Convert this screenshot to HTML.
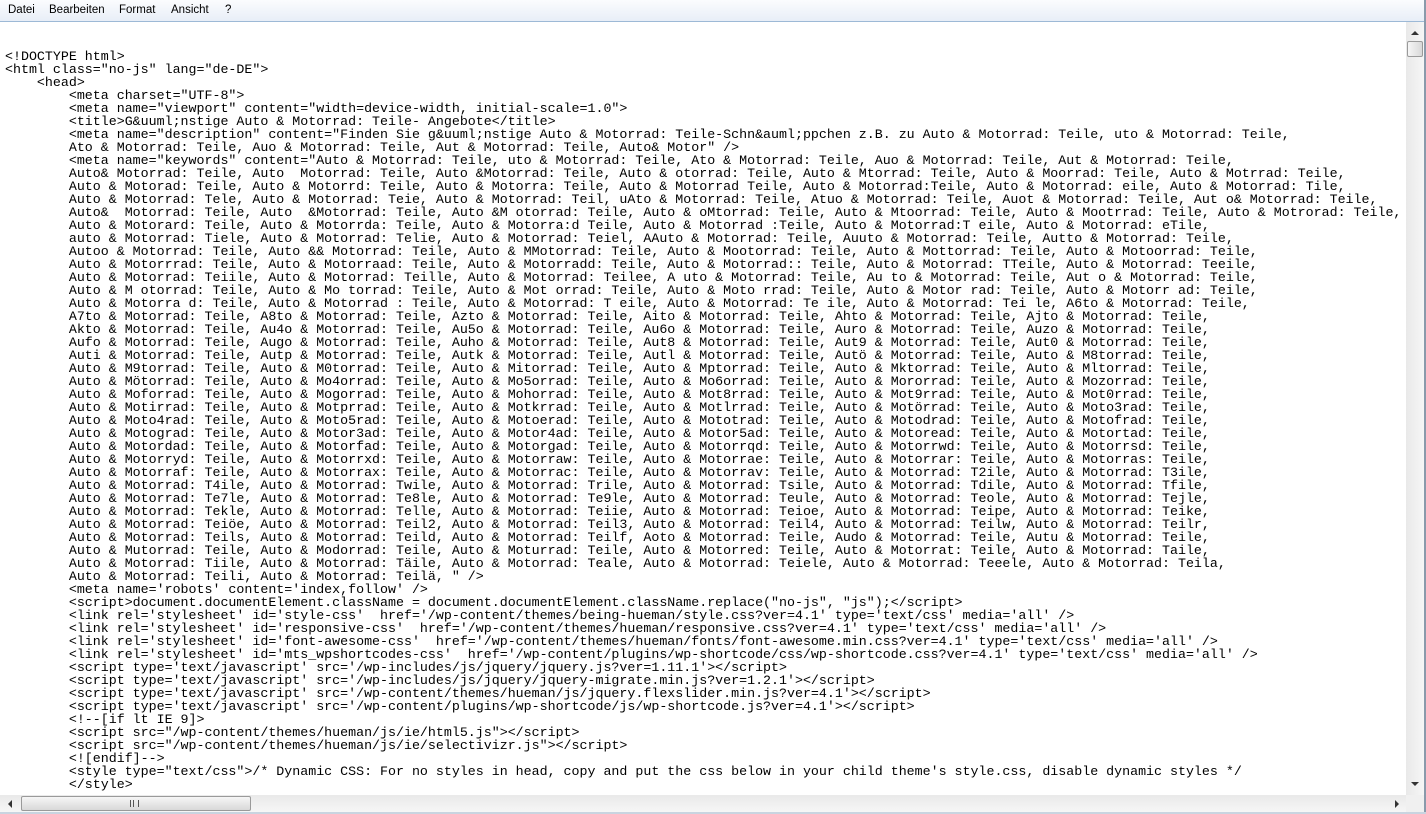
<!DOCTYPE html>
<html><head><meta charset="utf-8"><style>
html,body{margin:0;padding:0;width:1426px;height:814px;overflow:hidden;background:#fff;position:relative}
#menu{position:absolute;left:0;top:0;width:1426px;height:21px;background:linear-gradient(#fbfcfe,#e8eef7);border-bottom:1px solid #9db9d6;font:11.5px "Liberation Sans",sans-serif;color:#000}
#menu span{position:absolute;top:4px}
#txt{position:absolute;left:0;top:22px;width:1406px;height:773px;overflow:hidden}
pre{margin:0;position:absolute;left:5px;top:28px;font:13.31px/13px "Liberation Mono",monospace;color:#000;white-space:pre}
#vs{position:absolute;left:1406px;top:22px;width:18px;height:773px;background:linear-gradient(90deg,#e9e9e9,#f6f6f6)}
#hs{position:absolute;left:0;top:795px;width:1406px;height:17px;background:linear-gradient(#e9e9e9,#f6f6f6)}
#corner{position:absolute;left:1406px;top:795px;width:18px;height:17px;background:#f0f0f0}
#rb{position:absolute;left:1424px;top:0;width:2px;height:814px;background:#8a9aab}
#bb{position:absolute;left:0;top:812px;width:1426px;height:2px;background:#c9d4e0}
.thumb{position:absolute;border:1px solid #9a9a9a;border-radius:2px;background:linear-gradient(90deg,#f4f4f4,#dcdcdc)}
.tri{position:absolute;width:0;height:0}
</style></head><body>
<div id="menu"><span style="left:8px">Datei</span><span style="left:49px">Bearbeiten</span><span style="left:119px">Format</span><span style="left:171px">Ansicht</span><span style="left:225px">?</span></div>
<div id="txt"><pre>&lt;!DOCTYPE html&gt;
&lt;html class="no-js" lang="de-DE"&gt;
    &lt;head&gt;
        &lt;meta charset="UTF-8"&gt;
        &lt;meta name="viewport" content="width=device-width, initial-scale=1.0"&gt;
        &lt;title&gt;G&amp;uuml;nstige Auto &amp; Motorrad: Teile- Angebote&lt;/title&gt;
        &lt;meta name="description" content="Finden Sie g&amp;uuml;nstige Auto &amp; Motorrad: Teile-Schn&amp;auml;ppchen z.B. zu Auto &amp; Motorrad: Teile, uto &amp; Motorrad: Teile,
        Ato &amp; Motorrad: Teile, Auo &amp; Motorrad: Teile, Aut &amp; Motorrad: Teile, Auto&amp; Motor" /&gt;
        &lt;meta name="keywords" content="Auto &amp; Motorrad: Teile, uto &amp; Motorrad: Teile, Ato &amp; Motorrad: Teile, Auo &amp; Motorrad: Teile, Aut &amp; Motorrad: Teile,
        Auto&amp; Motorrad: Teile, Auto  Motorrad: Teile, Auto &amp;Motorrad: Teile, Auto &amp; otorrad: Teile, Auto &amp; Mtorrad: Teile, Auto &amp; Moorrad: Teile, Auto &amp; Motrrad: Teile,
        Auto &amp; Motorad: Teile, Auto &amp; Motorrd: Teile, Auto &amp; Motorra: Teile, Auto &amp; Motorrad Teile, Auto &amp; Motorrad:Teile, Auto &amp; Motorrad: eile, Auto &amp; Motorrad: Tile,
        Auto &amp; Motorrad: Tele, Auto &amp; Motorrad: Teie, Auto &amp; Motorrad: Teil, uAto &amp; Motorrad: Teile, Atuo &amp; Motorrad: Teile, Auot &amp; Motorrad: Teile, Aut o&amp; Motorrad: Teile,
        Auto&amp;  Motorrad: Teile, Auto  &amp;Motorrad: Teile, Auto &amp;M otorrad: Teile, Auto &amp; oMtorrad: Teile, Auto &amp; Mtoorrad: Teile, Auto &amp; Mootrrad: Teile, Auto &amp; Motrorad: Teile,
        Auto &amp; Motorard: Teile, Auto &amp; Motorrda: Teile, Auto &amp; Motorra:d Teile, Auto &amp; Motorrad :Teile, Auto &amp; Motorrad:T eile, Auto &amp; Motorrad: eTile,
        auto &amp; Motorrad: Tiele, Auto &amp; Motorrad: Telie, Auto &amp; Motorrad: Teiel, AAuto &amp; Motorrad: Teile, Auuto &amp; Motorrad: Teile, Autto &amp; Motorrad: Teile,
        Autoo &amp; Motorrad: Teile, Auto &amp;&amp; Motorrad: Teile, Auto &amp; MMotorrad: Teile, Auto &amp; Mootorrad: Teile, Auto &amp; Mottorrad: Teile, Auto &amp; Motoorrad: Teile,
        Auto &amp; Motorrrad: Teile, Auto &amp; Motorraad: Teile, Auto &amp; Motorradd: Teile, Auto &amp; Motorrad:: Teile, Auto &amp; Motorrad: TTeile, Auto &amp; Motorrad: Teeile,
        Auto &amp; Motorrad: Teiile, Auto &amp; Motorrad: Teille, Auto &amp; Motorrad: Teilee, A uto &amp; Motorrad: Teile, Au to &amp; Motorrad: Teile, Aut o &amp; Motorrad: Teile,
        Auto &amp; M otorrad: Teile, Auto &amp; Mo torrad: Teile, Auto &amp; Mot orrad: Teile, Auto &amp; Moto rrad: Teile, Auto &amp; Motor rad: Teile, Auto &amp; Motorr ad: Teile,
        Auto &amp; Motorra d: Teile, Auto &amp; Motorrad : Teile, Auto &amp; Motorrad: T eile, Auto &amp; Motorrad: Te ile, Auto &amp; Motorrad: Tei le, A6to &amp; Motorrad: Teile,
        A7to &amp; Motorrad: Teile, A8to &amp; Motorrad: Teile, Azto &amp; Motorrad: Teile, Aito &amp; Motorrad: Teile, Ahto &amp; Motorrad: Teile, Ajto &amp; Motorrad: Teile,
        Akto &amp; Motorrad: Teile, Au4o &amp; Motorrad: Teile, Au5o &amp; Motorrad: Teile, Au6o &amp; Motorrad: Teile, Auro &amp; Motorrad: Teile, Auzo &amp; Motorrad: Teile,
        Aufo &amp; Motorrad: Teile, Augo &amp; Motorrad: Teile, Auho &amp; Motorrad: Teile, Aut8 &amp; Motorrad: Teile, Aut9 &amp; Motorrad: Teile, Aut0 &amp; Motorrad: Teile,
        Auti &amp; Motorrad: Teile, Autp &amp; Motorrad: Teile, Autk &amp; Motorrad: Teile, Autl &amp; Motorrad: Teile, Autö &amp; Motorrad: Teile, Auto &amp; M8torrad: Teile,
        Auto &amp; M9torrad: Teile, Auto &amp; M0torrad: Teile, Auto &amp; Mitorrad: Teile, Auto &amp; Mptorrad: Teile, Auto &amp; Mktorrad: Teile, Auto &amp; Mltorrad: Teile,
        Auto &amp; Mötorrad: Teile, Auto &amp; Mo4orrad: Teile, Auto &amp; Mo5orrad: Teile, Auto &amp; Mo6orrad: Teile, Auto &amp; Mororrad: Teile, Auto &amp; Mozorrad: Teile,
        Auto &amp; Moforrad: Teile, Auto &amp; Mogorrad: Teile, Auto &amp; Mohorrad: Teile, Auto &amp; Mot8rrad: Teile, Auto &amp; Mot9rrad: Teile, Auto &amp; Mot0rrad: Teile,
        Auto &amp; Motirrad: Teile, Auto &amp; Motprrad: Teile, Auto &amp; Motkrrad: Teile, Auto &amp; Motlrrad: Teile, Auto &amp; Motörrad: Teile, Auto &amp; Moto3rad: Teile,
        Auto &amp; Moto4rad: Teile, Auto &amp; Moto5rad: Teile, Auto &amp; Motoerad: Teile, Auto &amp; Mototrad: Teile, Auto &amp; Motodrad: Teile, Auto &amp; Motofrad: Teile,
        Auto &amp; Motograd: Teile, Auto &amp; Motor3ad: Teile, Auto &amp; Motor4ad: Teile, Auto &amp; Motor5ad: Teile, Auto &amp; Motoread: Teile, Auto &amp; Motortad: Teile,
        Auto &amp; Motordad: Teile, Auto &amp; Motorfad: Teile, Auto &amp; Motorgad: Teile, Auto &amp; Motorrqd: Teile, Auto &amp; Motorrwd: Teile, Auto &amp; Motorrsd: Teile,
        Auto &amp; Motorryd: Teile, Auto &amp; Motorrxd: Teile, Auto &amp; Motorraw: Teile, Auto &amp; Motorrae: Teile, Auto &amp; Motorrar: Teile, Auto &amp; Motorras: Teile,
        Auto &amp; Motorraf: Teile, Auto &amp; Motorrax: Teile, Auto &amp; Motorrac: Teile, Auto &amp; Motorrav: Teile, Auto &amp; Motorrad: T2ile, Auto &amp; Motorrad: T3ile,
        Auto &amp; Motorrad: T4ile, Auto &amp; Motorrad: Twile, Auto &amp; Motorrad: Trile, Auto &amp; Motorrad: Tsile, Auto &amp; Motorrad: Tdile, Auto &amp; Motorrad: Tfile,
        Auto &amp; Motorrad: Te7le, Auto &amp; Motorrad: Te8le, Auto &amp; Motorrad: Te9le, Auto &amp; Motorrad: Teule, Auto &amp; Motorrad: Teole, Auto &amp; Motorrad: Tejle,
        Auto &amp; Motorrad: Tekle, Auto &amp; Motorrad: Telle, Auto &amp; Motorrad: Teiie, Auto &amp; Motorrad: Teioe, Auto &amp; Motorrad: Teipe, Auto &amp; Motorrad: Teike,
        Auto &amp; Motorrad: Teiöe, Auto &amp; Motorrad: Teil2, Auto &amp; Motorrad: Teil3, Auto &amp; Motorrad: Teil4, Auto &amp; Motorrad: Teilw, Auto &amp; Motorrad: Teilr,
        Auto &amp; Motorrad: Teils, Auto &amp; Motorrad: Teild, Auto &amp; Motorrad: Teilf, Aoto &amp; Motorrad: Teile, Audo &amp; Motorrad: Teile, Autu &amp; Motorrad: Teile,
        Auto &amp; Mutorrad: Teile, Auto &amp; Modorrad: Teile, Auto &amp; Moturrad: Teile, Auto &amp; Motorred: Teile, Auto &amp; Motorrat: Teile, Auto &amp; Motorrad: Taile,
        Auto &amp; Motorrad: Tiile, Auto &amp; Motorrad: Täile, Auto &amp; Motorrad: Teale, Auto &amp; Motorrad: Teiele, Auto &amp; Motorrad: Teeele, Auto &amp; Motorrad: Teila,
        Auto &amp; Motorrad: Teili, Auto &amp; Motorrad: Teilä, " /&gt;
        &lt;meta name='robots' content='index,follow' /&gt;
        &lt;script&gt;document.documentElement.className = document.documentElement.className.replace("no-js", "js");&lt;/script&gt;
        &lt;link rel='stylesheet' id='style-css'  href='/wp-content/themes/being-hueman/style.css?ver=4.1' type='text/css' media='all' /&gt;
        &lt;link rel='stylesheet' id='responsive-css'  href='/wp-content/themes/hueman/responsive.css?ver=4.1' type='text/css' media='all' /&gt;
        &lt;link rel='stylesheet' id='font-awesome-css'  href='/wp-content/themes/hueman/fonts/font-awesome.min.css?ver=4.1' type='text/css' media='all' /&gt;
        &lt;link rel='stylesheet' id='mts_wpshortcodes-css'  href='/wp-content/plugins/wp-shortcode/css/wp-shortcode.css?ver=4.1' type='text/css' media='all' /&gt;
        &lt;script type='text/javascript' src='/wp-includes/js/jquery/jquery.js?ver=1.11.1'&gt;&lt;/script&gt;
        &lt;script type='text/javascript' src='/wp-includes/js/jquery/jquery-migrate.min.js?ver=1.2.1'&gt;&lt;/script&gt;
        &lt;script type='text/javascript' src='/wp-content/themes/hueman/js/jquery.flexslider.min.js?ver=4.1'&gt;&lt;/script&gt;
        &lt;script type='text/javascript' src='/wp-content/plugins/wp-shortcode/js/wp-shortcode.js?ver=4.1'&gt;&lt;/script&gt;
        &lt;!--[if lt IE 9]&gt;
        &lt;script src="/wp-content/themes/hueman/js/ie/html5.js"&gt;&lt;/script&gt;
        &lt;script src="/wp-content/themes/hueman/js/ie/selectivizr.js"&gt;&lt;/script&gt;
        &lt;![endif]--&gt;
        &lt;style type="text/css"&gt;/* Dynamic CSS: For no styles in head, copy and put the css below in your child theme's style.css, disable dynamic styles */
        &lt;/style&gt;</pre></div>
<div id="vs">
  <div class="tri" style="left:5px;top:9px;border-left:4px solid transparent;border-right:4px solid transparent;border-bottom:4px solid #333"></div>
  <div class="thumb" style="left:1px;top:19px;width:14px;height:14px;background:linear-gradient(90deg,#f6f6f6,#d8d8d8)"></div>
  <div class="tri" style="left:5px;top:760px;border-left:4px solid transparent;border-right:4px solid transparent;border-top:4px solid #333"></div>
</div>
<div id="hs">
  <div class="tri" style="left:8px;top:5px;border-top:4px solid transparent;border-bottom:4px solid transparent;border-right:4px solid #333"></div>
  <div class="thumb" style="left:21px;top:1px;width:228px;height:13px;background:linear-gradient(#f6f6f6,#d8d8d8)"><div style="position:absolute;left:108px;top:3px;width:7px;height:7px;border-left:1px solid #555;border-right:1px solid #555"><div style="margin-left:2px;width:1px;height:7px;background:#555"></div></div></div>
  <div class="tri" style="left:1395px;top:5px;border-top:4px solid transparent;border-bottom:4px solid transparent;border-left:4px solid #333"></div>
</div>
<div id="corner"></div>
<div id="rb"></div>
<div id="bb"></div>
</body></html>
